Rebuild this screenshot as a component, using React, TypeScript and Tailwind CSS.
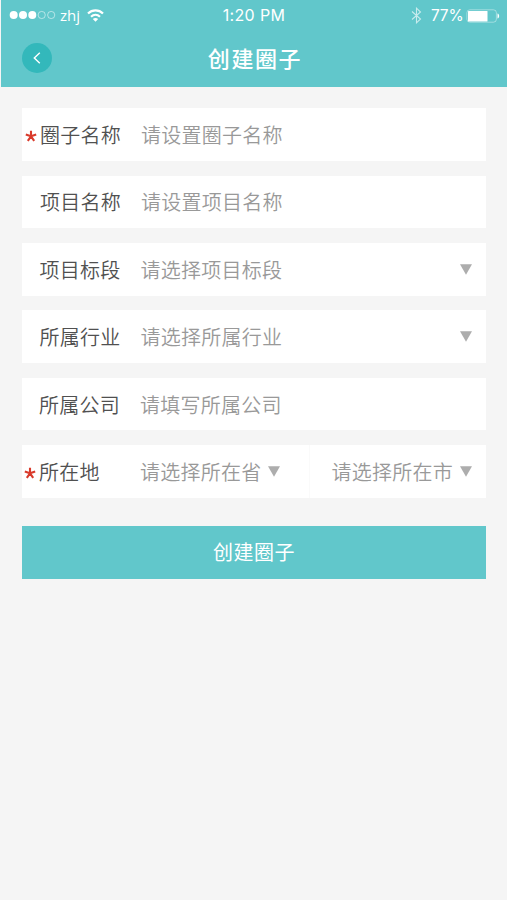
import React from "react";

function Caret({ className = "" }: { className?: string }) {
  return (
    <svg className={`shrink-0 ${className}`} width="12" height="11" viewBox="0 0 12 11">
      <path d="M0 0.3H12L6 10.8Z" fill="#adadad" />
    </svg>
  );
}

function Star() {
  return (
    <svg className="block" width="12" height="12" viewBox="0 0 12 12" stroke="#d93a2b" strokeWidth="2.1">
      <path d="M6 6.3V0.8M6 6.3L0.8 4.6M6 6.3L11.2 4.6M6 6.3L2.8 10.9M6 6.3L9.2 10.9" />
    </svg>
  );
}

type FieldProps = {
  label: string;
  hint: string;
  required?: boolean;
  caret?: boolean;
  offset?: string;
};

function Field({ label, hint, required, caret, offset = "pl-[3px]" }: FieldProps) {
  return (
    <div className={`flex h-[52.5px] items-center bg-white pr-[14px] ${offset}`}>
      <span className="flex w-[15px] shrink-0 pt-[2px]">{required && <Star />}</span>
      <span className="w-[101px] shrink-0 pt-px text-[#505050]">{label}</span>
      <span className="grow pt-px text-[#999]">{hint}</span>
      {caret && <Caret />}
    </div>
  );
}

export default function App() {
  return (
    <div className="flex h-[900px] w-[507px] flex-col overflow-hidden bg-[#f5f5f5] font-['Noto_Sans_CJK_SC',sans-serif]">
      <header className="ml-px h-[87px] bg-[#61c7cb] text-white">
        <div className="grid h-[31px] grid-cols-3 items-center font-[Inter,sans-serif] text-[15px] leading-none">
          <div className="flex items-center pl-[8px]">
            <svg className="-mt-px" width="48" height="10" viewBox="0 0 48 10" fill="white">
              <circle cx="4.7" cy="5" r="4" />
              <circle cx="14" cy="5" r="4" />
              <circle cx="23.3" cy="5" r="4" />
              <g fill="none" stroke="white" strokeOpacity="0.65" strokeWidth="0.8">
                <circle cx="32.7" cy="5" r="3.6" />
                <circle cx="42.2" cy="5" r="3.6" />
              </g>
            </svg>
            <span className="-mt-px ml-[3px] w-[21px] font-['Open_Sans',sans-serif] text-[15px] leading-[20px]">zhj</span>
            <svg className="-mt-px ml-[6px]" width="17" height="13" viewBox="0 0 17 13" fill="none" stroke="white" strokeWidth="2.2">
              <path d="M1 4.5C5.2 0.4 11.8 0.4 16 4.5" />
              <path d="M4 7.8C6.7 5.3 10.3 5.3 13 7.8" />
              <path d="M5.8 10C7.4 8.6 9.6 8.6 11.2 10L8.5 12.7Z" fill="white" stroke="none" />
            </svg>
          </div>
          <div className="-mt-px text-center text-[16px] tracking-[0.35px]">1:20 PM</div>
          <div className="flex items-center justify-end pr-[7px]">
            <svg className="mr-[9px]" width="11" height="17" viewBox="0 0 11 17" fill="none" stroke="white" strokeOpacity="0.65" strokeWidth="1.1">
              <path d="M1 4.5L9.5 12L5.5 15.8V1.2L9.5 5L1 12.5" />
            </svg>
            <span className="w-[33px] text-[15.5px] tracking-[-0.2px]">77%</span>
            <svg className="ml-[2px]" width="34" height="14" viewBox="0 0 34 14">
              <rect x="0.9" y="0.8" width="29.5" height="12.4" rx="3" fill="none" stroke="white" strokeOpacity="0.4" />
              <rect x="2" y="2" width="19.5" height="10.5" rx="0.5" fill="white" />
              <path d="M31.5 4.5C33.7 5 33.7 9 31.5 9.5Z" fill="white" />
            </svg>
          </div>
        </div>
        <div className="grid h-[56px] grid-cols-[1fr_auto_1fr] items-center pb-[2px]">
          <button className="ml-[21px] flex h-[30px] w-[30px] items-center justify-center rounded-full bg-[#33b8bb]">
            <svg width="8" height="12" viewBox="0 0 8 12" fill="none" stroke="white" strokeWidth="1.4">
              <path d="M6.8 0.8L1.3 6L6.8 11.2" />
            </svg>
          </button>
          <h1 className="-mt-[3px] ml-[2px] text-[22px] font-medium leading-[30px] tracking-[1.6px]">创建圈子</h1>
          <span />
        </div>
      </header>
      <main className="flex flex-col pl-[22px] pr-[21px] pt-[21.3px] text-[20px] font-[350] leading-[30px] tracking-[0.25px]">
        <div className="flex flex-col gap-[14.9px]">
          <Field label="圈子名称" hint="请设置圈子名称" required />
          <Field label="项目名称" hint="请设置项目名称" />
          <Field label="项目标段" hint="请选择项目标段" caret offset="pl-[2.5px]" />
          <Field label="所属行业" hint="请选择所属行业" caret offset="pl-[2.5px]" />
          <Field label="所属公司" hint="请填写所属公司" offset="pl-[2px]" />
          <div className="flex h-[52.5px] bg-white text-[#999]">
            <div className="flex w-[288px] items-center border-r border-[#fafafa] pl-[2px]">
              <span className="flex w-[15px] shrink-0 pt-[2px]"><Star /></span>
              <span className="w-[101px] shrink-0 pt-px text-[#505050]">所在地</span>
              <span className="pt-px">请选择所在省</span>
              <Caret className="ml-[6.5px]" />
            </div>
            <div className="flex grow items-center justify-end pr-[14px]">
              <span className="pt-px">请选择所在市</span>
              <Caret className="ml-[7px]" />
            </div>
          </div>
        </div>
        <button className="mt-[28px] h-[53px] bg-[#61c7cb] text-[20px] font-normal leading-[30px] tracking-[0.5px] text-white">
          创建圈子
        </button>
      </main>
    </div>
  );
}
